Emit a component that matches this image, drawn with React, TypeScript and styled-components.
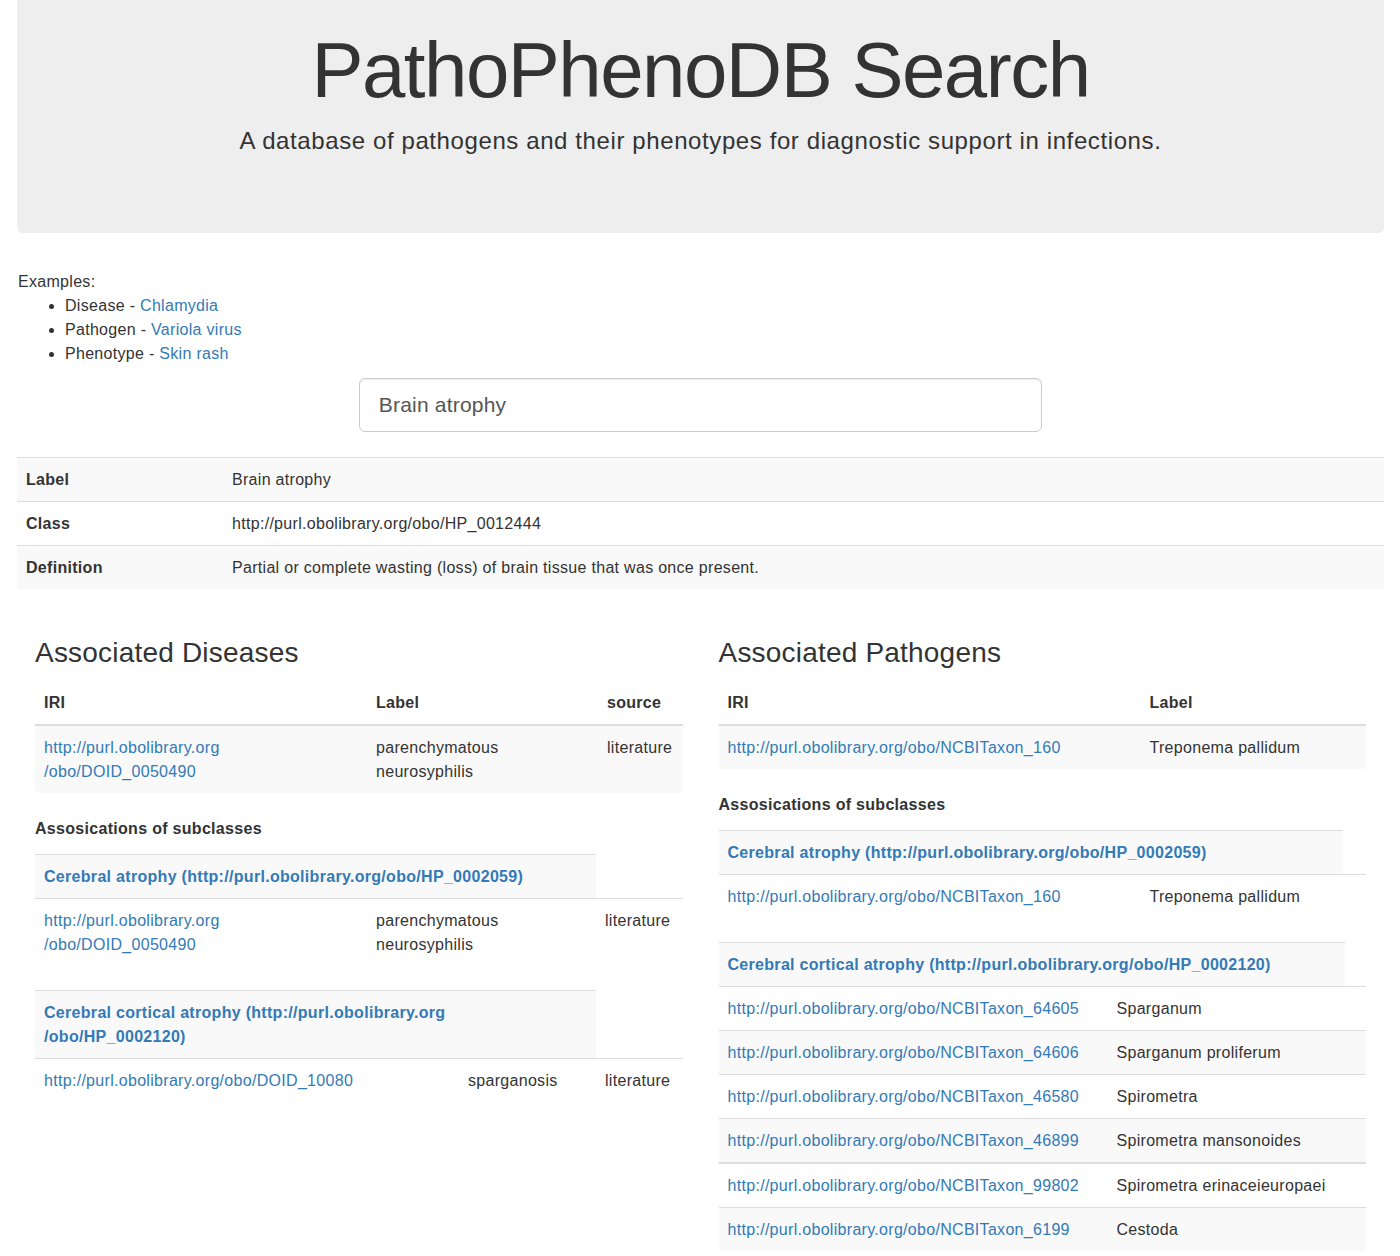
import React from 'react'
import styled, { createGlobalStyle } from 'styled-components'

const GlobalStyle = createGlobalStyle`
  html, body {
    margin: 0;
    padding: 0;
    background: #fff;
  }
  body {
    font-family: "Liberation Sans", Arial, sans-serif;
    font-size: 16px;
    line-height: 24px;
    letter-spacing: 0.3px;
    color: #333;
  }
  * { box-sizing: border-box; }
`

type Row = { cells: React.ReactNode[]; heavy?: boolean }

const BASE = 'http://purl.obolibrary.org/obo/'

const Page = () => {
  return (
    <>
      <GlobalStyle />
      <Container>
        <Jumbotron>
          <Title>PathoPhenoDB Search</Title>
          <Lead>A database of pathogens and their phenotypes for diagnostic support in infections.</Lead>
        </Jumbotron>

        <Examples>
          Examples:
          <ExampleList>
            <li>Disease - <Link href="#">Chlamydia</Link></li>
            <li>Pathogen - <Link href="#">Variola virus</Link></li>
            <li>Phenotype - <Link href="#">Skin rash</Link></li>
          </ExampleList>
        </Examples>

        <SearchWrap>
          <SearchInput type="text" defaultValue="Brain atrophy" />
        </SearchWrap>

        <InfoTable>
          <colgroup>
            <col style={{ width: 206 }} />
            <col />
          </colgroup>
          <tbody>
            <tr><th>Label</th><td>Brain atrophy</td></tr>
            <tr><th>Class</th><td>{BASE}HP_0012444</td></tr>
            <tr><th>Definition</th><td>Partial or complete wasting (loss) of brain tissue that was once present.</td></tr>
          </tbody>
        </InfoTable>

        <Columns>
          <Column>
            <SectionTitle>Associated Diseases</SectionTitle>
            <DataTable
              cols={[332, 231]}
              head={['IRI', 'Label', 'source']}
              rows={[
                { cells: [<Link href="#">http://purl.obolibrary.org<br />/obo/DOID_0050490</Link>, <>parenchymatous<br />neurosyphilis</>, 'literature'] },
              ]}
            />
            <SubLabel>Assosications of subclasses</SubLabel>
            <DataTable
              cols={[332, 229]}
              subHeader={<Link href="#">Cerebral atrophy ({BASE}HP_0002059)</Link>}
              rows={[
                { cells: [<Link href="#">http://purl.obolibrary.org<br />/obo/DOID_0050490</Link>, <>parenchymatous<br />neurosyphilis</>, 'literature'] },
              ]}
            />
            <DataTable
              cols={[424, 137]}
              subHeader={<Link href="#">Cerebral cortical atrophy (http://purl.obolibrary.org<br />/obo/HP_0002120)</Link>}
              rows={[
                { cells: [<Link href="#">{BASE}DOID_10080</Link>, 'sparganosis', 'literature'] },
              ]}
            />
          </Column>

          <Column>
            <SectionTitle>Associated Pathogens</SectionTitle>
            <DataTable
              cols={[422, 202]}
              head={['IRI', 'Label', '']}
              rows={[
                { cells: [<Link href="#">{BASE}NCBITaxon_160</Link>, 'Treponema pallidum', ''] },
              ]}
            />
            <SubLabel>Assosications of subclasses</SubLabel>
            <DataTable
              cols={[422, 202]}
              subHeader={<Link href="#">Cerebral atrophy ({BASE}HP_0002059)</Link>}
              rows={[
                { cells: [<Link href="#">{BASE}NCBITaxon_160</Link>, 'Treponema pallidum', ''] },
              ]}
            />
            <DataTable
              cols={[389, 237]}
              subHeader={<Link href="#">Cerebral cortical atrophy ({BASE}HP_0002120)</Link>}
              rows={[
                { cells: [<Link href="#">{BASE}NCBITaxon_64605</Link>, 'Sparganum', ''] },
                { cells: [<Link href="#">{BASE}NCBITaxon_64606</Link>, 'Sparganum proliferum', ''] },
                { cells: [<Link href="#">{BASE}NCBITaxon_46580</Link>, 'Spirometra', ''] },
                { cells: [<Link href="#">{BASE}NCBITaxon_46899</Link>, 'Spirometra mansonoides', ''] },
                { cells: [<Link href="#">{BASE}NCBITaxon_99802</Link>, 'Spirometra erinaceieuropaei', ''], heavy: true },
                { cells: [<Link href="#">{BASE}NCBITaxon_6199</Link>, 'Cestoda', ''] },
              ]}
            />
          </Column>
        </Columns>
      </Container>
    </>
  )
}

const DataTable = ({
  cols,
  head,
  subHeader,
  rows,
}: {
  cols: number[]
  head?: string[]
  subHeader?: React.ReactNode
  rows: Row[]
}) => (
  <Table>
    <colgroup>
      {cols.map((w, i) => <col key={i} style={{ width: w }} />)}
      <col />
    </colgroup>
    {head && (
      <thead>
        <tr>{head.map((h, i) => <th key={i}>{h}</th>)}</tr>
      </thead>
    )}
    <tbody>
      {subHeader && (
        <tr>
          <th colSpan={cols.length}>{subHeader}</th>
        </tr>
      )}
      {rows.map((r, i) => (
        <BodyRow key={i} $heavy={r.heavy}>
          {r.cells.map((c, j) => <td key={j}>{c}</td>)}
        </BodyRow>
      ))}
    </tbody>
  </Table>
)

export default Page

const Container = styled.div`
  padding: 0 16px 40px 17px;
`
const Jumbotron = styled.div`
  background: #eee;
  border-radius: 0 0 6px 6px;
  padding: 28px 0 76px;
  text-align: center;
  margin-bottom: 37px;
`
const Title = styled.h1`
  margin: 0 0 10px;
  font-size: 78px;
  line-height: 1.1;
  font-weight: 400;
  letter-spacing: -1.5px;
  color: #333;
`
const Lead = styled.p`
  margin: 0;
  font-size: 24px;
  line-height: 1.4;
  font-weight: 300;
  letter-spacing: 0.6px;
`
const Examples = styled.div`
  padding-left: 1px;
`
const ExampleList = styled.ul`
  margin: 0;
  padding-left: 47px;
  list-style: disc;
`
const Link = styled.a`
  color: #337ab7;
  text-decoration: none;
`
const SearchWrap = styled.div`
  width: 50%;
  margin: 12px auto 0;
`
const SearchInput = styled.input`
  display: block;
  width: 100%;
  height: 54px;
  padding: 0 19px;
  font-family: "Liberation Sans", Arial, sans-serif;
  font-size: 21px;
  letter-spacing: 0.2px;
  color: #555;
  background: #fff;
  border: 1px solid #ccc;
  border-radius: 6px;
  box-shadow: inset 0 1px 1px rgba(0, 0, 0, 0.075);
  outline: none;
`
const InfoTable = styled.table`
  width: 100%;
  margin-top: 25px;
  border-collapse: collapse;
  table-layout: fixed;
  th, td {
    text-align: left;
    padding: 10px 9px 9px;
    line-height: 24px;
    border-top: 1px solid #ddd;
    vertical-align: top;
  }
  th { font-weight: 700; }
  tr:nth-child(odd) { background: #f9f9f9; }
`
const Columns = styled.div`
  display: grid;
  grid-template-columns: 1fr 1fr;
  margin-top: 24px;
`
const Column = styled.div`
  padding: 0 18px;
  min-width: 0;
`
const SectionTitle = styled.h3`
  margin: 25px 0 12px;
  font-size: 28px;
  line-height: 1.1;
  font-weight: 400;
  letter-spacing: 0.2px;
  color: #333;
`
const SubLabel = styled.div`
  font-weight: 700;
  margin: 0 0 13px;
`
const Table = styled.table`
  width: 100%;
  margin-bottom: 24px;
  border-collapse: collapse;
  table-layout: fixed;
  th, td {
    text-align: left;
    padding: 10px 9px 9px;
    line-height: 24px;
    vertical-align: top;
    border-top: 1px solid #ddd;
  }
  th { font-weight: 700; }
  thead th {
    border-top: 0;
    padding-top: 10px;
    vertical-align: bottom;
    border-bottom: 2px solid #ddd;
  }
  tbody tr:nth-child(odd) { background: #f9f9f9; }
`
const BodyRow = styled.tr<{ $heavy?: boolean }>`
  td {
    border-top: ${p => (p.$heavy ? '2px' : '1px')} solid #ddd;
  }
`
